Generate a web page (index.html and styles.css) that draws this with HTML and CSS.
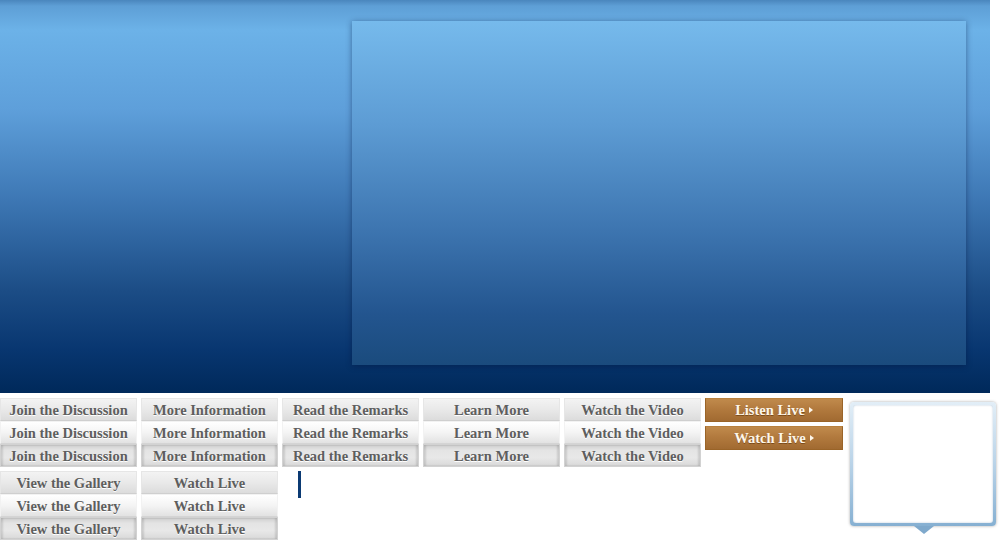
FILE: index.html
```html
<!DOCTYPE html>
<html>
<head>
<meta charset="utf-8">
<link rel="stylesheet" href="styles.css">
</head>
<body>
<div class="hero">
  <div class="panel"></div>
</div>
<div class="bar">
  <div class="groups">
    <div class="row">
      <div class="col">
        <div class="btn">Join the Discussion</div>
        <div class="btn hover">Join the Discussion</div>
        <div class="btn down">Join the Discussion</div>
      </div>
      <div class="col">
        <div class="btn">More Information</div>
        <div class="btn hover">More Information</div>
        <div class="btn down">More Information</div>
      </div>
      <div class="col">
        <div class="btn">Read the Remarks</div>
        <div class="btn hover">Read the Remarks</div>
        <div class="btn down">Read the Remarks</div>
      </div>
      <div class="col">
        <div class="btn">Learn More</div>
        <div class="btn hover">Learn More</div>
        <div class="btn down">Learn More</div>
      </div>
      <div class="col">
        <div class="btn">Watch the Video</div>
        <div class="btn hover">Watch the Video</div>
        <div class="btn down">Watch the Video</div>
      </div>
      <div class="col orange-col">
        <div class="obtn">Listen Live <span class="tri"></span></div>
        <div class="obtn">Watch Live <span class="tri"></span></div>
      </div>
    </div>
    <div class="row">
      <div class="col">
        <div class="btn">View the Gallery</div>
        <div class="btn hover">View the Gallery</div>
        <div class="btn down">View the Gallery</div>
      </div>
      <div class="col">
        <div class="btn">Watch Live</div>
        <div class="btn hover">Watch Live</div>
        <div class="btn down">Watch Live</div>
      </div>
      <div class="vline"></div>
    </div>
  </div>
  <div class="popup">
    <div class="popup-inner"></div>
    <span class="pointer"></span>
  </div>
</div>
</body>
</html>
```

FILE: styles.css
```css
html, body {
  margin: 0;
  padding: 0;
  background: #fff;
}
body {
  width: 1001px;
  height: 542px;
  overflow: hidden;
  font-family: "Liberation Serif", "DejaVu Serif", serif;
}
.hero {
  width: 990px;
  height: 393px;
  background: linear-gradient(to bottom, #4a86bd 0px, #5e9fd6 6px, #6cb2e8 30px, #5e9fda 110px, #3d77b4 200px, #1c4d86 290px, #083670 350px, #00295a 393px);
  padding: 21px 0 0 352px;
  box-sizing: border-box;
}
.panel {
  width: 614px;
  height: 344px;
  background: linear-gradient(to bottom, #76baec 0%, #5d9cd4 30%, #3e76b1 60%, #23558f 85%, #1a4b7d 100%);
  box-shadow: 0 1px 6px rgba(0, 20, 60, 0.45);
}
.bar {
  display: flex;
  gap: 7px;
  margin-top: 5px;
}
.groups {
  display: flex;
  flex-direction: column;
  gap: 4px;
}
.row {
  display: flex;
  gap: 4px;
}
.col {
  display: flex;
  flex-direction: column;
  width: 137px;
}
.btn {
  height: 23px;
  box-sizing: border-box;
  display: flex;
  align-items: center;
  justify-content: center;
  padding-top: 1px;
  font-size: 14.5px;
  font-weight: bold;
  color: #5e5e5e;
  background: linear-gradient(to bottom, #f3f3f3 0%, #e9e9e9 50%, #dcdcdc 100%);
  border: 1px solid #e6e6e6;
  border-bottom-color: #cfcfcf;
  text-shadow: 0 1px 0 #fff;
  white-space: nowrap;
}
.btn.hover {
  background: linear-gradient(to bottom, #ffffff 0%, #f4f4f4 50%, #e2e2e2 100%);
  border-color: #f2f2f2;
  border-bottom-color: #d4d4d4;
}
.btn.down {
  background: linear-gradient(to bottom, #cfcfcf 0%, #e4e4e4 25%, #e8e8e8 60%, #d9d9d9 100%);
  border-color: #d2d2d2;
  box-shadow: inset 2px 0 2px rgba(0,0,0,0.12), inset -2px 0 2px rgba(0,0,0,0.12);
}
.orange-col {
  width: 138px;
  gap: 4px;
}
.obtn {
  height: 24px;
  box-sizing: border-box;
  display: flex;
  align-items: center;
  justify-content: center;
  gap: 4px;
  font-size: 14.5px;
  font-weight: bold;
  color: #fdf6ea;
  background: linear-gradient(to bottom, #c08a4c 0%, #b27a3e 45%, #a16a31 100%);
  border: 1px solid #9a6428;
  border-top-color: #b8813f;
  text-shadow: 0 1px 0 rgba(80, 40, 0, 0.5);
}
.tri {
  width: 0;
  height: 0;
  border-left: 4px solid #fdf6ea;
  border-top: 3.5px solid transparent;
  border-bottom: 3.5px solid transparent;
}
.vline {
  width: 3px;
  height: 27px;
  margin-left: 16px;
  background: #0b3a73;
}
.popup {
  position: relative;
  margin-top: 4px;
  width: 146px;
  height: 124px;
  box-sizing: border-box;
  border-radius: 4px;
  padding: 3px;
  background: linear-gradient(to bottom, #e2eef7 0%, #b9d3e8 50%, #86b0d2 100%);
  box-shadow: 0 0 3px rgba(0, 0, 0, 0.35);
}
.popup-inner {
  width: 100%;
  height: 100%;
  background: #fff;
  border-radius: 3px;
  box-shadow: inset 0 0 2px rgba(100, 140, 180, 0.5);
}
.pointer {
  position: absolute;
  left: 64px;
  bottom: -8px;
  width: 0;
  height: 0;
  border-left: 10px solid transparent;
  border-right: 10px solid transparent;
  border-top: 8px solid #7fa9cc;
}
```
